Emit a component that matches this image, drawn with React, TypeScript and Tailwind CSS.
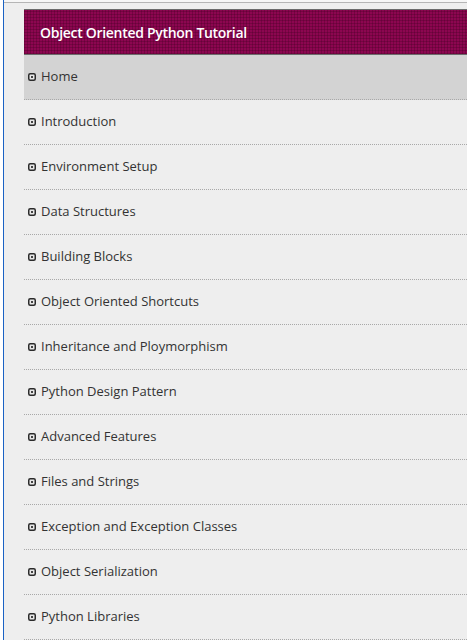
const chapters = [
  'Home',
  'Introduction',
  'Environment Setup',
  'Data Structures',
  'Building Blocks',
  'Object Oriented Shortcuts',
  'Inheritance and Ploymorphism',
  'Python Design Pattern',
  'Advanced Features',
  'Files and Strings',
  'Exception and Exception Classes',
  'Object Serialization',
  'Python Libraries',
];

function Bullet() {
  return (
    <svg width="8" height="8" viewBox="0 0 8 8" className="shrink-0">
      <rect x="0.75" y="0.75" width="6.5" height="6.5" rx="1.5" fill="#e8e8e8" stroke="#2b2b2b" strokeWidth="1.5" />
      <rect x="3" y="3" width="2" height="2" fill="#444" />
    </svg>
  );
}

function App() {
  return (
    <div className="flex h-[640px] w-[467px] overflow-hidden bg-[#eeeeee] font-['Open_Sans',sans-serif]">
      {/* edge of the page underneath */}
      <div className="w-[3px] shrink-0 bg-white" />
      <div className="w-px shrink-0 bg-[#1a62c4]" />

      <div className="flex min-w-0 flex-1 flex-col">
        <div className="h-[2px] bg-[#f6f6f6]" />
        <div className="h-px bg-[#b5b5b5]" />

        <div className="flex flex-1 flex-col pl-5 pt-[6px]">
          {/* Sidebar title */}
          <div className="flex h-[46px] items-center border-y border-[#6b6b6b] bg-[#8c0650] bg-[repeating-linear-gradient(0deg,rgba(60,0,30,0.28)_0px,rgba(60,0,30,0.28)_1px,transparent_1px,transparent_3px),repeating-linear-gradient(90deg,rgba(60,0,30,0.28)_0px,rgba(60,0,30,0.28)_1px,transparent_1px,transparent_3px)] pl-[16px]">
            <span className="text-[14px] font-semibold tracking-[-0.3px] text-white">
              Object Oriented Python Tutorial
            </span>
          </div>

          <ul className="flex flex-col">
            {chapters.map((name, i) => (
              <li
                key={name}
                className={`flex h-[45px] items-center gap-[5px] border-b border-dotted border-[#a8a8a8] pl-[4px] ${
                  i === 0 ? 'bg-[#d3d3d3]' : ''
                }`}
              >
                <Bullet />
                <a className="text-[13px] text-[#333333]">{name}</a>
              </li>
            ))}
          </ul>
        </div>
      </div>
    </div>
  );
}

export default App;
